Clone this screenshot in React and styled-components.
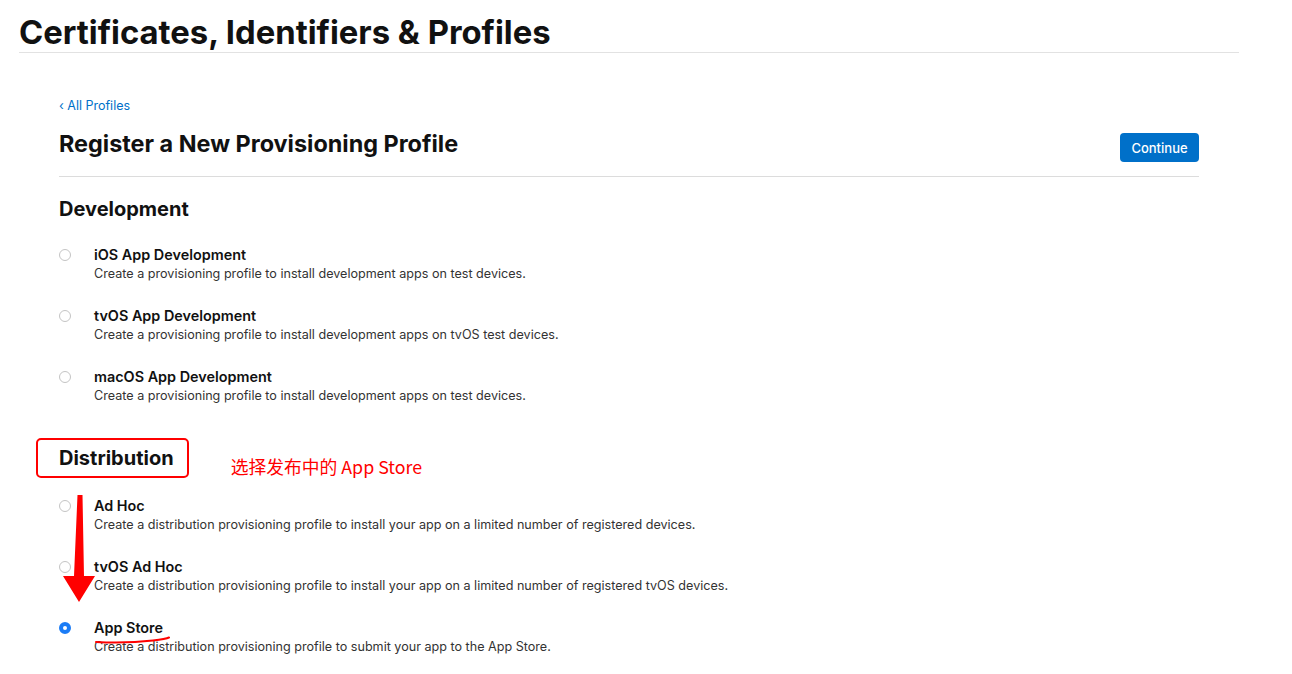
import React from 'react'
import styled, { createGlobalStyle } from 'styled-components'

const GlobalStyle = createGlobalStyle`
  body {
    margin: 0;
    background: #fff;
    font-family: Inter, "Noto Sans", "Noto Sans CJK SC", sans-serif;
    color: #111;
  }
`

const development = [
  { name: 'iOS App Development', desc: 'Create a provisioning profile to install development apps on test devices.' },
  { name: 'tvOS App Development', desc: 'Create a provisioning profile to install development apps on tvOS test devices.' },
  { name: 'macOS App Development', desc: 'Create a provisioning profile to install development apps on test devices.' }
]

const distribution = [
  { name: 'Ad Hoc', desc: 'Create a distribution provisioning profile to install your app on a limited number of registered devices.' },
  { name: 'tvOS Ad Hoc', desc: 'Create a distribution provisioning profile to install your app on a limited number of registered tvOS devices.' },
  { name: 'App Store', desc: 'Create a distribution provisioning profile to submit your app to the App Store.', checked: true }
]

const Option = ({ name, desc, checked, underline }) => (
  <Row>
    <Radio checked={checked} />
    <OptionText>
      <OptionName>
        {name}
        {underline && (
          <Scribble viewBox="0 0 76 10" width="76" height="10">
            <path d="M1 8 C 20 9, 45 8, 58 6.5 S 72 4.5, 74 3.5" fill="none" stroke="#f00" strokeWidth="2" strokeLinecap="round" />
          </Scribble>
        )}
      </OptionName>
      <OptionDesc>{desc}</OptionDesc>
    </OptionText>
  </Row>
)

export default function App() {
  return (
    <>
      <GlobalStyle />
      <Header>
        <PageTitle>Certificates, Identifiers &amp; Profiles</PageTitle>
      </Header>
      <Main>
        <Back href="#profiles">‹ All Profiles</Back>
        <TitleBar>
          <SubTitle>Register a New Provisioning Profile</SubTitle>
          <Continue>Continue</Continue>
        </TitleBar>

        <Section>
          <SectionHead>Development</SectionHead>
          <List>
            {development.map(o => <Option key={o.name} {...o} />)}
          </List>
        </Section>

        <Section>
          <NoteRow>
            <Marked>
              <SectionHead>Distribution</SectionHead>
            </Marked>
            <Note>选择发布中的 App Store</Note>
          </NoteRow>
          <List $annotated>
            <Arrow viewBox="0 0 38 114" width="38" height="114">
              <polygon points="17.5,4 22.5,4 24,85 35,85 19,111 3,85 14,85" fill="#f00" />
            </Arrow>
            {distribution.map(o => (
              <Option key={o.name} {...o} underline={o.checked} />
            ))}
          </List>
        </Section>
      </Main>
    </>
  )
}

const Header = styled.header`
  margin: 0 53px 0 19px;
  padding-top: 12px;
  border-bottom: 1px solid #e2e2e2;
`

const PageTitle = styled.h1`
  margin: 0;
  font-size: 32.8px;
  line-height: 40px;
  font-weight: 700;
  color: #111;
`

const Main = styled.main`
  width: 1140px;
  margin: 0 0 0 59px;
  padding-top: 45px;
`

const Back = styled.a`
  display: block;
  font-size: 12.5px;
  line-height: 16px;
  color: #0070c9;
  text-decoration: none;
`

const TitleBar = styled.div`
  display: flex;
  align-items: flex-start;
  justify-content: space-between;
  padding: 15px 0 14px;
  border-bottom: 1px solid #dcdcdc;
`

const SubTitle = styled.h2`
  margin: 0;
  font-size: 23.4px;
  line-height: 30px;
  font-weight: 700;
  color: #111;
`

const Continue = styled.button`
  width: 79px;
  height: 29px;
  margin-top: 4px;
  border: 0;
  border-radius: 4px;
  background: #0070c9;
  color: #fff;
  font-family: inherit;
  font-size: 13px;
  font-weight: 500;
`

const Section = styled.section`
  padding-top: 20px;
`

const SectionHead = styled.h3`
  margin: 0;
  font-size: 20px;
  line-height: 24px;
  font-weight: 700;
  color: #111;
`

const NoteRow = styled.div`
  display: flex;
  align-items: center;
  gap: 42px;
  margin-top: 12px;
`

const Marked = styled.div`
  margin-left: -23px;
  padding: 6px 13px 6px 21px;
  border: 2px solid #f00;
  border-radius: 5px;
`

const Note = styled.span`
  color: #f00;
  font-size: 17.8px;
  margin-top: 16px;
  font-family: "Noto Sans CJK SC", Inter, sans-serif;
`

const List = styled.div`
  position: relative;
  display: flex;
  flex-direction: column;
  gap: 23px;
  padding-top: ${p => (p.$annotated ? '17px' : '24px')};
`

const Row = styled.div`
  display: flex;
  align-items: flex-start;
`

const Radio = styled.span`
  flex: none;
  box-sizing: border-box;
  width: 12px;
  height: 12px;
  margin: 4px 23px 0 0;
  border-radius: 50%;
  border: ${p => (p.checked ? '4px solid #1b7cf6' : '1px solid #c4c4c4')};
  background: #fff;
`

const OptionText = styled.div`
  display: flex;
  flex-direction: column;
`

const OptionName = styled.div`
  position: relative;
  font-size: 14.4px;
  line-height: 20px;
  font-weight: 600;
  color: #111;
`

const OptionDesc = styled.div`
  font-size: 12.6px;
  line-height: 18px;
  color: #333;
`

const Arrow = styled.svg`
  position: absolute;
  left: 1px;
  top: 12px;
  z-index: 1;
`

const Scribble = styled.svg`
  position: absolute;
  left: 1px;
  top: 16px;
`
